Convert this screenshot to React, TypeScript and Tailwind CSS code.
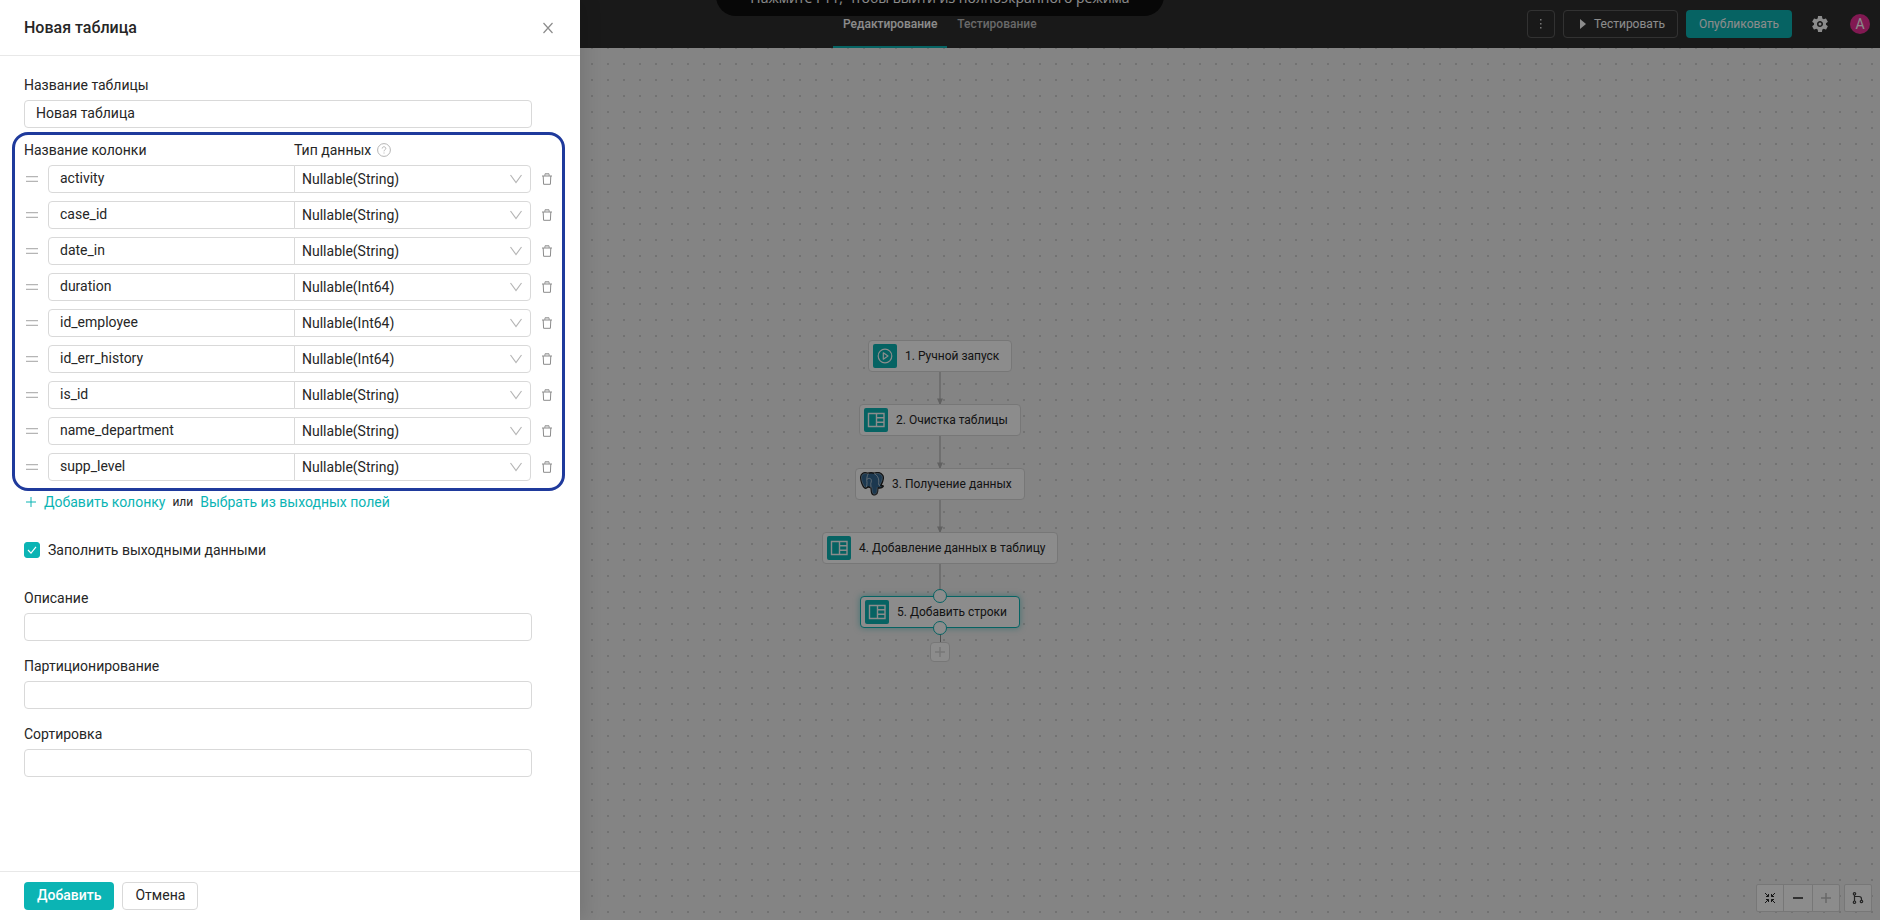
import { useState } from "react";
import type { ReactNode } from "react";

const COLUMNS = [
  { name: "activity", type: "Nullable(String)" },
  { name: "case_id", type: "Nullable(String)" },
  { name: "date_in", type: "Nullable(String)" },
  { name: "duration", type: "Nullable(Int64)" },
  { name: "id_employee", type: "Nullable(Int64)" },
  { name: "id_err_history", type: "Nullable(Int64)" },
  { name: "is_id", type: "Nullable(String)" },
  { name: "name_department", type: "Nullable(String)" },
  { name: "supp_level", type: "Nullable(String)" },
];

const TYPES = ["Nullable(String)", "Nullable(Int64)"];

function PlayNodeIcon() {
  return (
    <svg viewBox="0 0 24 24" className="h-6 w-6 shrink-0">
      <rect width="24" height="24" rx="2" fill="#0bb4b4" />
      <circle cx="12" cy="12" r="6.8" fill="none" stroke="#fff" strokeWidth="1.2" />
      <path d="M10.3 8.8 15 12l-4.7 3.2z" fill="none" stroke="#fff" strokeWidth="1.2" strokeLinejoin="round" />
    </svg>
  );
}

function TableNodeIcon() {
  return (
    <svg viewBox="0 0 24 24" className="h-6 w-6 shrink-0">
      <rect width="24" height="24" rx="2" fill="#0bb4b4" />
      <path d="M4.5 5.5h15.5v13H4.500zM12.500 5.500v13M12.500 9.800H20M12.500 14.200H20" fill="none" stroke="#fff" strokeWidth="1.4" />
    </svg>
  );
}

function PostgresIcon() {
  return (
    <svg viewBox="0 0 24 24" className="h-6 w-6 shrink-0" strokeLinecap="round" strokeLinejoin="round">
      <path
        d="M7.5 1.2C3.5-.1.5 1.6.7 6c.2 3.5 2 8.5 4 10 .9.6 1.7.2 2.300-.4l1.500-.8c.5.6 1.600.9 2.500.8.3 1.500.2 3.500.7 5.200.5 1.800 2 2.500 3.700 1.900 1.600-.6 2-1.800 2.200-3.400l.3-3.600c2 .5 4.200.1 5.200-1.200.4-.7-.2-1-1-.8l-1.300-.1C22.500 10.500 24 5.500 22.700 3.300 20.500.3 16.800.3 14.500 1.200c-2.200-.6-4.700-.6-7 0z"
        fill="#336791"
        stroke="#222"
        strokeWidth="1.4"
      />
      <path
        d="M7.5 1.800C3.800.8 1.300 2.300 1.500 6c.2 3 1.800 7.800 3.500 9.200M14.800 1.800c2.300-.7 5.200-.6 7.200 1.900 1 1.800-.3 6.300-2.500 9.300M11.900 15.500c.2 1.600.1 3.500.6 5.100.4 1.300 1.500 1.900 2.800 1.400 1.300-.4 1.600-1.400 1.700-2.800l.3-3.700"
        fill="none"
        stroke="#a9bccb"
        strokeWidth=".5"
      />
      <path
        d="M8.2 1.800C6.700 4 6.500 8 7 10.500c.2 1.200-.3 3-.5 4.300M14.500 1.600c2.500 1.400 4.300 4.200 4.300 7.400 0 2.300-1 3.500 1 5M11 15.300c.2-2-.8-3 .2-5.300.5-1.800 0-3.300-1.500-3.600-1.200-.2-2 .3-2.600.9"
        fill="none"
        stroke="#dbe4ea"
        strokeWidth=".7"
      />
    </svg>
  );
}

type NodeProps = {
  label: string;
  icon: ReactNode;
  width: string;
  selected?: boolean;
};

function FlowNode({ label, icon, width, selected }: NodeProps) {
  return (
    <div
      className={`relative flex h-8 items-center rounded border bg-white pl-1 text-xs text-[#262626] ${width} ${
        selected ? "border-[#0bb4b4] shadow-[0_0_6px_rgba(11,180,180,0.5)]" : "border-[#d9d9d9]"
      }`}
    >
      {selected && (
        <>
          <span className="absolute -top-2 left-1/2 h-3.5 w-3.5 -translate-x-1/2 rounded-full border border-[#0bb4b4] bg-white" />
          <span className="absolute -bottom-2 left-1/2 h-3.5 w-3.5 -translate-x-1/2 rounded-full border border-[#0bb4b4] bg-white" />
        </>
      )}
      {icon}
      <span className="ml-2 whitespace-nowrap">{label}</span>
    </div>
  );
}

function Arrow({ head = true }: { head?: boolean }) {
  return (
    <svg viewBox="0 0 8 32" className="h-8 w-2">
      <path d="M4 0v32" stroke="#cacaca" strokeWidth="2" />
      {head && <path d="M1 26.500h6L4.500 32h-1z" fill="#b1b1b1" />}
    </svg>
  );
}

function Toolbar() {
  return (
    <header className="relative flex h-12 shrink-0 items-center justify-end bg-[#2f2f2f] pr-2.5 text-xs">
      <nav className="absolute inset-y-0 left-[833px] flex font-medium">
        <a href="#edit" className="flex items-center border-b-2 border-[#0bb4b4] px-2.5 pt-0.5 text-white">
          Редактирование
        </a>
        <a href="#test" className="flex items-center border-b-2 border-transparent px-2.5 pt-0.5 text-[#bfbfbf]">
          Тестирование
        </a>
      </nav>
      <button aria-label="Меню" className="flex h-7 w-7 items-center justify-center rounded border border-[#5c5c5c]">
        <svg viewBox="0 0 4 12" className="h-3 w-1" fill="#d9d9d9">
          <rect x="1" y="1" width="1.5" height="1.5" />
          <rect x="1" y="5" width="1.5" height="1.5" />
          <rect x="1" y="9" width="1.5" height="1.5" />
        </svg>
      </button>
      <button className="ml-2 flex h-7 w-[115px] items-center justify-center gap-2 rounded border border-[#5c5c5c] pl-1 text-white">
        <svg viewBox="0 0 6 10" className="h-2.5 w-1.5" fill="#fff">
          <path d="M0 0l6 5-6 5z" />
        </svg>
        Тестировать
      </button>
      <button className="ml-2 h-7 w-[106px] rounded bg-[#0bb4b4] text-white">Опубликовать</button>
      <button aria-label="Настройки" className="ml-[18px]">
        <svg viewBox="0 0 24 24" className="h-5 w-5" fill="#fff">
          <path d="M19.14 12.94c.04-.3.06-.61.06-.94s-.02-.64-.07-.94l2.03-1.58a.49.49 0 0 0 .12-.61l-1.92-3.32a.488.488 0 0 0-.59-.22l-2.39.96c-.5-.38-1.03-.7-1.62-.94l-.36-2.54a.484.484 0 0 0-.48-.41h-3.84c-.24 0-.43.17-.47.41l-.36 2.54c-.59.24-1.13.57-1.62.94l-2.39-.96c-.22-.08-.47 0-.59.22L2.74 8.87c-.12.21-.08.47.12.61l2.03 1.58c-.05.3-.09.63-.09.94s.02.64.07.94l-2.03 1.58a.49.49 0 0 0-.12.61l1.92 3.32c.12.22.37.29.59.22l2.39-.96c.5.38 1.03.7 1.62.94l.36 2.54c.05.24.24.41.48.41h3.84c.24 0 .44-.17.47-.41l.36-2.54c.59-.24 1.13-.56 1.62-.94l2.39.96c.22.08.47 0 .59-.22l1.92-3.32c.12-.22.07-.47-.12-.61zM12 15.6A3.61 3.61 0 0 1 8.4 12c0-1.98 1.62-3.6 3.6-3.6s3.6 1.62 3.6 3.6-1.62 3.6-3.6 3.6" />
          <circle cx="12" cy="12" r="1.8" />
        </svg>
      </button>
      <span className="ml-5 flex h-5 w-5 items-center justify-center rounded-full bg-[#eb2f96] text-sm text-white">A</span>
    </header>
  );
}

function ZoomControls() {
  const cell = "flex h-7 items-center justify-center border border-[#d9d9d9] bg-white";
  return (
    <div className="absolute right-2 bottom-2 flex gap-1">
      <div className="flex">
        <button aria-label="По размеру" className={`${cell} w-7 rounded-l-xs`}>
          <svg viewBox="0 0 12 12" className="h-3 w-3" fill="none" stroke="#262626">
            <path d="M1 1l3.5 3.500M11 1 7.500 4.500M1 11l3.500-3.500M11 11 7.500 7.500M2 4.500h2.500V2M10 4.500H7.500V2M2 7.500h2.500V10M10 7.500H7.500V10" />
          </svg>
        </button>
        <button aria-label="Уменьшить" className={`${cell} -mx-px w-[30px]`}>
          <svg viewBox="0 0 12 12" className="h-3 w-3" stroke="#595959" strokeWidth="2">
            <path d="M1 6h10" />
          </svg>
        </button>
        <button aria-label="Увеличить" disabled className={`${cell} w-7 rounded-r-xs`}>
          <svg viewBox="0 0 12 12" className="h-3 w-3" stroke="#bfbfbf" strokeWidth="1.5">
            <path d="M1 6h10M6 1v10" />
          </svg>
        </button>
      </div>
      <button aria-label="Упорядочить" className={`${cell} w-7 rounded-xs`}>
        <svg viewBox="0 0 12 12" className="h-3 w-3" fill="none" stroke="#434343" strokeWidth="1.2">
          <circle cx="2.5" cy="1.8" r="1.2" />
          <circle cx="2.5" cy="10.2" r="1.2" />
          <circle cx="9.5" cy="9.5" r="1.2" />
          <path d="M2.5 3v6M2.500 4.500h4.500q2.500 0 2.500 2.500v1.300" />
        </svg>
      </button>
    </div>
  );
}

function Canvas() {
  return (
    <main className="relative flex-1 bg-[#f0f0f0] bg-[radial-gradient(circle,#cfcfcf_1px,transparent_1px)] bg-[length:16px_16px] bg-[position:8px_8px]">
      <div className="absolute top-[292px] left-1/2 flex -translate-x-1/2 flex-col items-center">
        <FlowNode label="1. Ручной запуск" width="w-36" icon={<PlayNodeIcon />} />
        <Arrow />
        <FlowNode label="2. Очистка таблицы" width="w-[162px]" icon={<TableNodeIcon />} />
        <Arrow />
        <FlowNode label="3. Получение данных" width="w-[170px]" icon={<PostgresIcon />} />
        <Arrow />
        <FlowNode label="4. Добавление данных в таблицу" width="w-[236px]" icon={<TableNodeIcon />} />
        <Arrow head={false} />
        <FlowNode label="5. Добавить строки" width="w-40" icon={<TableNodeIcon />} selected />
        <span className="h-3.5 w-px bg-[#8c8c8c]" />
        <button aria-label="Добавить шаг" className="flex h-5 w-5 items-center justify-center rounded border border-[#d9d9d9] bg-white">
          <svg viewBox="0 0 10 10" className="h-2.5 w-2.5" stroke="#d9d9d9" strokeWidth="1.5">
            <path d="M0 5h10M5 0v10" />
          </svg>
        </button>
      </div>
      <ZoomControls />
    </main>
  );
}

function TextField({ id, label, defaultValue }: { id: string; label: string; defaultValue?: string }) {
  return (
    <div>
      <label htmlFor={id} className="mb-1 block leading-[22px]">
        {label}
      </label>
      <input
        id={id}
        defaultValue={defaultValue}
        className="block h-7 w-full rounded border border-[#d9d9d9] px-[11px] pb-0.5 outline-none focus:border-[#0bb4b4]"
      />
    </div>
  );
}

function ColumnRow({ name, type }: { name: string; type: string }) {
  return (
    <div className="flex items-center">
      <svg viewBox="0 0 12 6" className="mr-2.5 ml-0.5 h-1.5 w-3" stroke="#b5b5b5" strokeWidth="1.2">
        <path d="M0 .6h12M0 5.4h12" />
      </svg>
      <div className="min-w-0 flex-[247]">
        <input
          aria-label="Название колонки"
          defaultValue={name}
          className="block h-7 w-full rounded-l border border-[#d9d9d9] px-[11px] pb-0.5 outline-none focus:border-[#0bb4b4]"
        />
      </div>
      <div className="relative -ml-px min-w-0 flex-[237]">
        <select
          aria-label="Тип данных"
          defaultValue={type}
          className="block h-7 w-full appearance-none rounded-r border border-[#d9d9d9] bg-white px-[7px] outline-none"
        >
          {TYPES.map((t) => (
            <option key={t}>{t}</option>
          ))}
        </select>
        <svg viewBox="0 0 12 10" className="pointer-events-none absolute top-[9px] right-[9px] h-2.5 w-3" fill="none" stroke="#b5b5b5" strokeWidth="1.2">
          <path d="M.5 1 6 8.5 11.5 1" />
        </svg>
      </div>
      <button aria-label="Удалить колонку" className="ml-2.5">
        <svg viewBox="0 0 12 12" className="h-3 w-3" fill="none" stroke="#8c8c8c">
          <path d="M1 3h10M4 3V.8h4V3M2.2 3l.4 8.300h6.800L9.800 3" />
          <path d="M4 2h4" stroke="#bfbfbf" />
        </svg>
      </button>
    </div>
  );
}

function Drawer() {
  const [fill, setFill] = useState(true);

  return (
    <aside className="absolute inset-y-0 left-0 flex w-[580px] flex-col bg-white text-sm text-[#262626] shadow-[6px_0_16px_rgba(0,0,0,0.1)]">
      <div className="flex h-14 shrink-0 items-center justify-between border-b border-[#e8e8e8] px-6">
        <h2 className="text-base font-medium">Новая таблица</h2>
        <button aria-label="Закрыть" className="mr-0.5">
          <svg viewBox="0 0 12 12" className="h-3 w-3" stroke="#8c8c8c" strokeWidth="1.2">
            <path d="M1.5 1l9 10M10.5 1l-9 10" />
          </svg>
        </button>
      </div>

      <form className="flex-1 overflow-hidden pt-[18px]" onSubmit={(e) => e.preventDefault()}>
        <div className="mr-12 ml-6">
          <TextField id="table-name" label="Название таблицы" defaultValue="Новая таблица" />
        </div>

        <section className="mt-1 mr-[15px] ml-3 rounded-2xl border-[3px] border-[#1f3a9c] px-[9px] pt-1 pb-[7px]">
          <div className="mb-1 flex leading-[22px]">
            <span className="w-[270px]">Название колонки</span>
            <span className="flex items-center gap-1.5">
              Тип данных
              <svg viewBox="0 0 14 14" className="h-3.5 w-3.5" fill="none" stroke="#b5b5b5">
                <circle cx="7" cy="7" r="6.4" />
                <path d="M5.2 5.5c0-2.300 3.600-2.300 3.600 0C8.800 6.800 7 6.800 7 8.300M7 9.500v1" />
              </svg>
            </span>
          </div>
          <div className="flex flex-col gap-2">
            {COLUMNS.map((c) => (
              <ColumnRow key={c.name} {...c} />
            ))}
          </div>
        </section>

        <div className="mr-12 ml-6">
          <div className="flex items-center leading-[22px]">
            <button type="button" className="flex items-center gap-2 text-[#0bb4b4]">
              <svg viewBox="0 0 10 10" className="ml-0.5 h-2.5 w-2.5" stroke="currentColor">
                <path d="M0 5h10M5 0v10" />
              </svg>
              Добавить колонку
            </button>
            <span className="mx-[7px] text-xs">или</span>
            <button type="button" className="text-[#0bb4b4]">
              Выбрать из выходных полей
            </button>
          </div>

          <label className="mt-[26px] flex items-center gap-2 leading-[22px]">
            <span className="relative flex h-4 w-4">
              <input
                type="checkbox"
                checked={fill}
                onChange={(e) => setFill(e.target.checked)}
                className="peer h-4 w-4 appearance-none rounded-[3px] border border-[#d9d9d9] checked:border-[#0bb4b4] checked:bg-[#0bb4b4]"
              />
              <svg viewBox="0 0 16 16" className="pointer-events-none absolute inset-0 hidden h-4 w-4 peer-checked:block" fill="none" stroke="#fff" strokeWidth="1.2">
                <path d="M4 8l3 3.2L12 4.8" />
              </svg>
            </span>
            Заполнить выходными данными
          </label>

          <div className="mt-[26px] flex flex-col gap-3.5">
            <TextField id="description" label="Описание" />
            <TextField id="partition" label="Партиционирование" />
            <TextField id="sorting" label="Сортировка" />
          </div>
        </div>
      </form>

      <div className="flex shrink-0 gap-2 border-t border-[#e8e8e8] px-6 py-2.5">
        <button className="h-7 rounded bg-[#0bb4b4] px-[13px] pb-0.5 font-medium text-white">Добавить</button>
        <button className="h-7 rounded border border-[#d9d9d9] px-3 pb-0.5">Отмена</button>
      </div>
    </aside>
  );
}

export default function App() {
  return (
    <div className="relative flex h-screen flex-col overflow-hidden font-['Roboto',sans-serif]">
      <Toolbar />
      <Canvas />
      <div className="absolute inset-x-0 top-0 flex justify-center">
        <div className="-mt-6 flex h-10 w-[448px] items-end justify-center rounded-b-[20px] bg-[#0e0e0e] pb-2 font-['Open_Sans',sans-serif] text-sm leading-5 whitespace-nowrap text-white">
          Нажмите F11, чтобы выйти из полноэкранного режима
        </div>
      </div>
      <div className="absolute inset-0 bg-black/45" />
      <Drawer />
    </div>
  );
}
